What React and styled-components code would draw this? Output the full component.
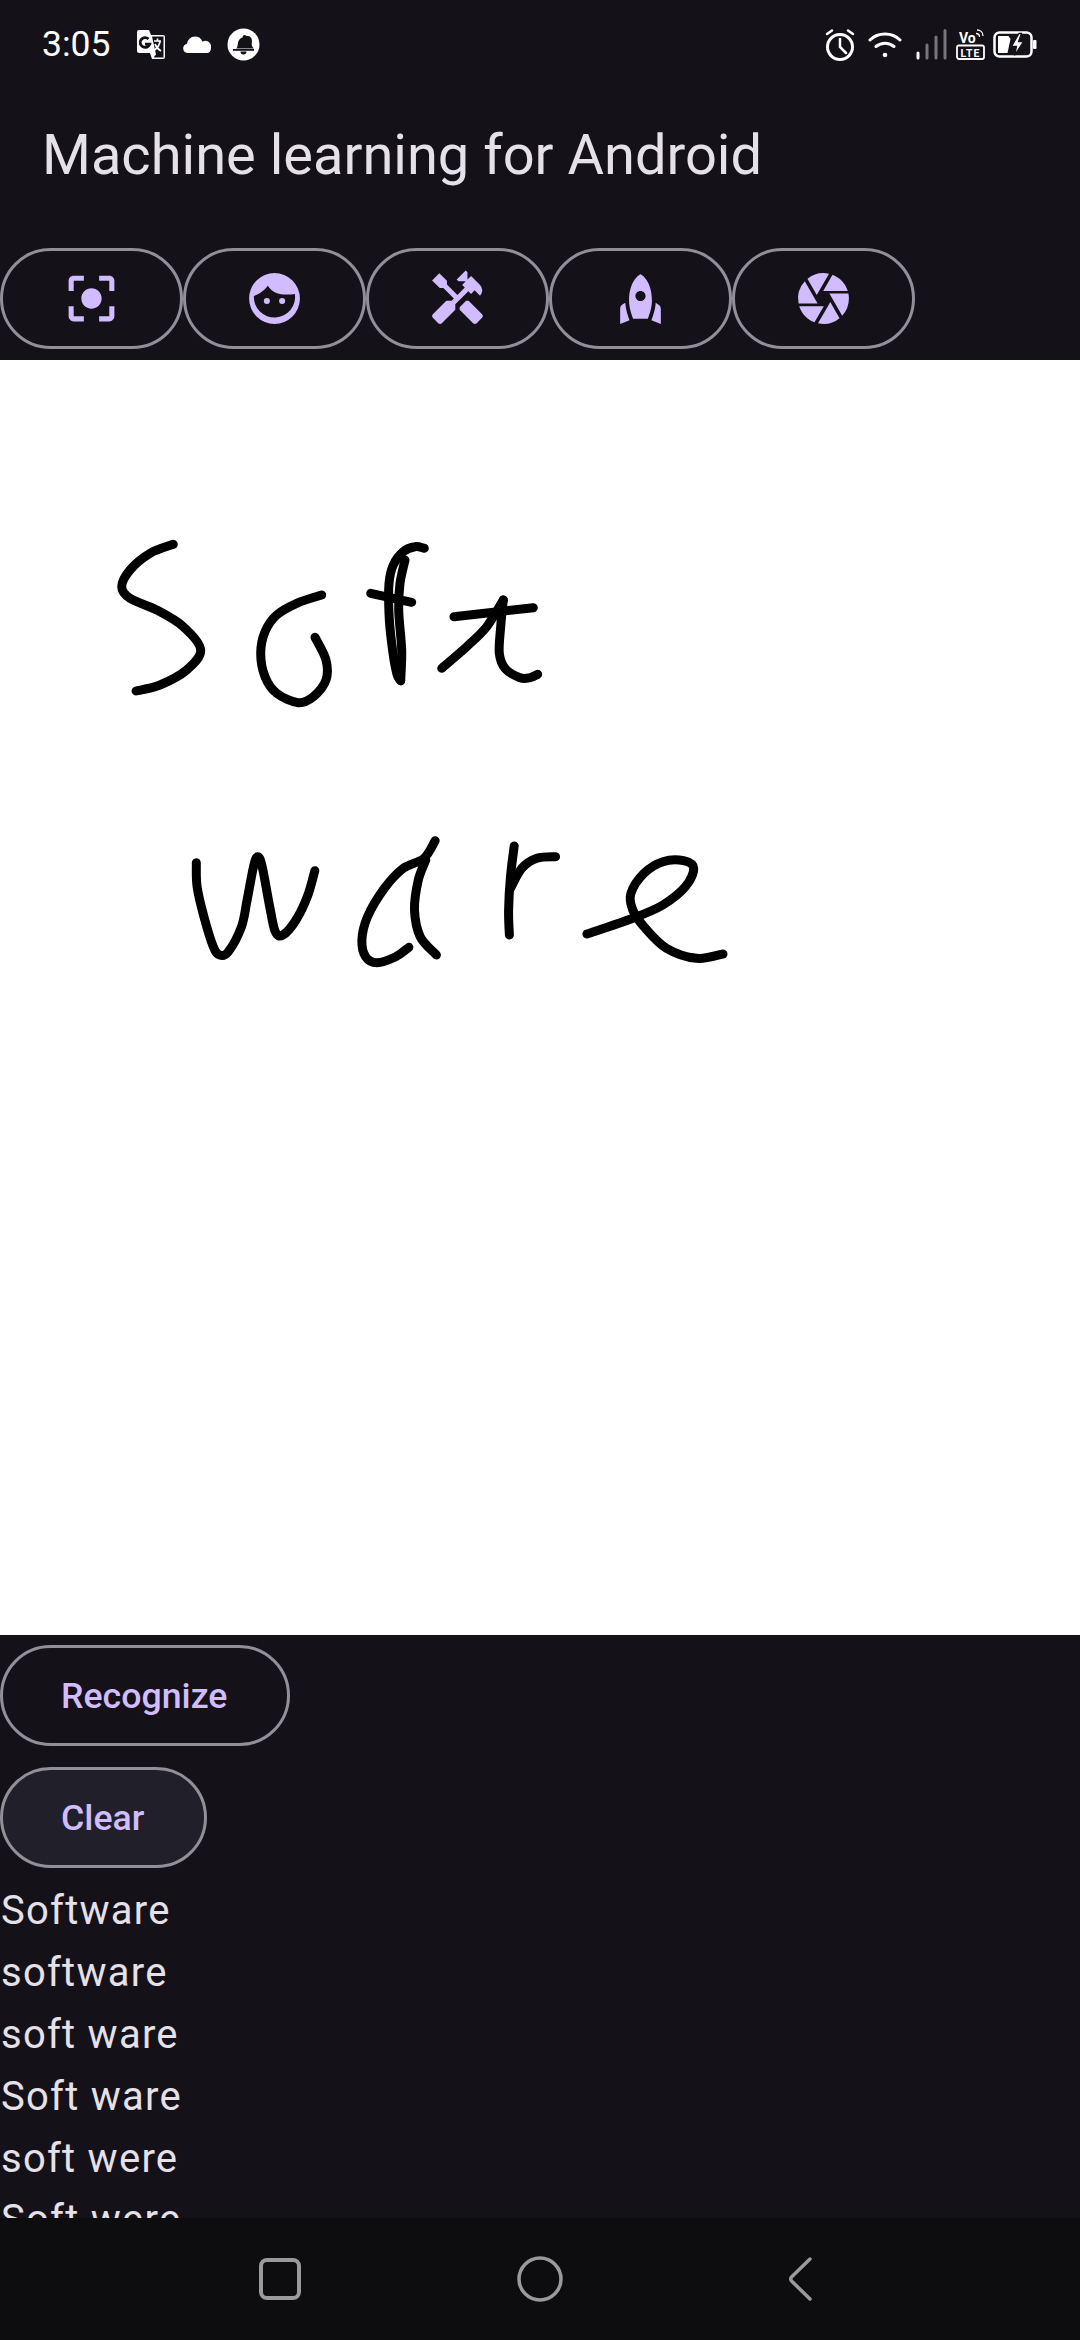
import React from "react";
import styled, { createGlobalStyle } from "styled-components";
import { MdCenterFocusStrong, MdHandyman, MdRocket, MdCamera } from "react-icons/md";

const Global = createGlobalStyle`
  html, body { margin: 0; padding: 0; background: #141218; }
  * { box-sizing: border-box; }
`;

const Screen = styled.div`
  width: 1080px; height: 2340px; display: flex; flex-direction: column;
  background: #141218; overflow: hidden; font-family: Roboto, "Noto Sans", sans-serif;
`;
const StatusBar = styled.div`
  height: 88px; flex: none; display: flex; align-items: center; justify-content: space-between;
  padding: 0 43px 0 42px; color: #fff;
`;
const StatusGroup = styled.div`display: flex; align-items: center;`;
const Time = styled.span`font-size: 35.5px; width: 95px;`;
const StatusIcon = styled.svg`display: block; flex: none; margin-left: ${p => p.$ml || 0}px;`;
const TitleBar = styled.div`
  height: 134px; flex: none; display: flex; align-items: center; padding-left: 42px;
  font-size: 56px; color: #E6E0E9;
`;
const ToolRow = styled.div`flex: none; display: flex; padding: 26px 0 11px 0;`;
const ToolButton = styled.button`
  width: 183px; height: 101px; border: 3px solid #938F99; border-radius: 51px; background: transparent;
  color: #D0BCFF; display: flex; align-items: center; justify-content: center; padding: 0;
`;
const Canvas = styled.div`height: 1275px; flex: none; background: #fff;`;
const Ink = styled.svg`display: block;`;
const Results = styled.div`flex: 1; min-height: 0; overflow: hidden; padding-top: 10px;`;
const TextButton = styled.button`
  display: block; height: 101px; margin-bottom: 21px; padding: 0 60px 0 58px; border: 3px solid #938F99;
  border-radius: 51px; background: ${p => (p.$focused ? "#211F29" : "transparent")};
  color: #D0BCFF; font: 500 35.7px Roboto, sans-serif;
`;
const Candidates = styled.div`margin-top: -9px;`;
const Candidate = styled.div`
  height: 61.9px; line-height: 61.9px; font-size: 40px; letter-spacing: 1.25px; color: #E6E0E9; padding-left: 1px;
`;
const NavBar = styled.div`
  height: 122px; flex: none; background: #0D0D0F; display: flex; justify-content: center; align-items: center;
`;
const NavCell = styled.div`width: 260px; display: flex; justify-content: center;`;

const FaceIcon = () => (
  <svg width="61" height="61" viewBox="0 0 24 24">
    <path fill="currentColor" fillRule="evenodd" d="M12 2a10 10 0 1 0 0 20 10 10 0 0 0 0-20ZM3.900 11C5.500 10.500 8 9 9.400 7 10.500 9 13 10.300 15.500 10.400 17 10.500 18.800 10.400 20 10.200A8.100 8.100 0 1 1 3.900 11ZM9 11.800a1.200 1.200 0 1 0 0 2.400 1.200 1.200 0 0 0 0-2.400ZM15 11.800a1.200 1.200 0 1 0 0 2.400 1.200 1.200 0 0 0 0-2.400Z" />
  </svg>
);

const tools = [
  <MdCenterFocusStrong key="a" size={61} />,
  <FaceIcon key="b" />,
  <MdHandyman key="c" size={61} />,
  <MdRocket key="d" size={61} />,
  <MdCamera key="e" size={61} />,
];

// Each stroke: control points read from crops of the drawing, mapped back to page coordinates.
const map5 = ([x, y]) => [90 + x / 3, 510 + y / 3];
const map6 = ([x, y]) => [170 + x / 2.658, 810 + y / 3];
const smooth = pts => {
  let d = `M${pts[0][0].toFixed(1)} ${pts[0][1].toFixed(1)}`;
  for (let i = 0; i < pts.length - 1; i++) {
    const p0 = pts[i - 1] || pts[i], p1 = pts[i], p2 = pts[i + 1], p3 = pts[i + 2] || p2;
    const c1 = [p1[0] + (p2[0] - p0[0]) / 6, p1[1] + (p2[1] - p0[1]) / 6];
    const c2 = [p2[0] - (p3[0] - p1[0]) / 6, p2[1] - (p3[1] - p1[1]) / 6];
    d += `C${c1[0].toFixed(1)} ${c1[1].toFixed(1)} ${c2[0].toFixed(1)} ${c2[1].toFixed(1)} ${p2[0].toFixed(1)} ${p2[1].toFixed(1)}`;
  }
  return d;
};
const strokes = [
  ...[
    [[250,103],[180,130],[120,180],[95,230],[120,265],[200,300],[280,350],[332,420],[290,480],[210,525],[138,543]],
    [[695,255],[620,280],[560,315],[525,365],[512,430],[525,500],[560,550],[625,578],[670,560],[708,510],[708,450],[675,382]],
    [[1003,115],[975,110],[940,125],[910,165],[897,220],[897,310],[905,400],[920,490],[932,512]],
    [[945,150],[930,220],[926,300],[935,420],[932,512]],
    [[842,250],[965,277]],
    [[1092,320],[1330,293]],
    [[1055,475],[1130,410],[1190,350],[1240,270]],
    [[1240,270],[1232,350],[1228,430],[1245,475],[1290,503],[1320,503],[1343,493]],
  ].map(s => s.map(map5)),
  ...[
    [[70,158],[72,230],[90,320],[115,410],[132,435],[155,425],[190,350],[205,270],[222,170],[233,140],[245,170],[265,290],[280,365],[300,375],[335,330],[365,260],[385,182]],
    [[705,92],[675,145],[620,175],[570,235],[525,320],[510,390],[520,440],[550,458],[600,440],[635,412]],
    [[680,150],[660,210],[650,300],[665,380],[708,435]],
    [[915,108],[905,200],[900,300],[902,375]],
    [[905,235],[935,175],[975,145],[1025,140]],
    [[1108,372],[1230,325],[1310,285],[1370,230],[1392,175],[1365,152],[1310,155],[1260,190],[1225,250],[1230,300],[1260,350],[1320,415],[1400,445],[1470,432]],
  ].map(s => s.map(map6)),
];

const candidates = ["Software", "software", "soft ware", "Soft ware", "soft were", "Soft were"];

export default function App() {
  return (
    <Screen>
      <Global />
      <StatusBar>
        <StatusGroup>
          <Time>3:05</Time>
          <StatusIcon width="28" height="29" viewBox="0 0 28 29">
            <path fill="#fff" d="M0 2a2 2 0 0 1 2-2h10l2 5h12a2 2 0 0 1 2 2v20a2 2 0 0 1-2 2H15l-2-6H2a2 2 0 0 1-2-2Z" />
            <path fill="#141218" d="M15 6.500H26.500v21H16.500L19 24.500 15 6.500Z" />
            <path fill="none" stroke="#141218" strokeWidth="2.800" d="M11.500 9a4.900 4.900 0 1 0 1.200 5.200H8" />
            <path fill="none" stroke="#fff" strokeWidth="1.700" d="M17 11h7M20.500 8.500v2.500M23 11.500c-.6 3.500-2.500 6.500-5.500 8.500M18 14c1 3 3 5.200 6 7" />
          </StatusIcon>
          <StatusIcon $ml={18} width="28" height="17" viewBox="0 0 28 17">
            <path fill="#fff" d="M4.500 17a4.500 4.500 0 0 1-.7-8.900A8.500 8.500 0 0 1 12 0.500a8 8 0 0 1 7.500 5.200A5.800 5.800 0 0 1 28 12c0 3-1.800 5-4 5Z" />
          </StatusIcon>
          <StatusIcon $ml={16} width="33" height="33" viewBox="0 0 33 33">
            <circle cx="16.500" cy="16.500" r="16" fill="#fff" />
            <path fill="#141218" d="M9 20.500c2-1 1.500-5 2.500-7.500s3-3.200 4-3.500c.3-2.500 2.500-3 3.500-1.800 2.500 0 4.500.6 5.500 2.800 1 2.500-.2 5.500.5 7.500.3 1 1 1.800 1.800 2.500Z" />
            <rect x="6" y="21" width="21" height="1.800" fill="#141218" />
            <path fill="#141218" d="M13.500 23.500h6a3 3 0 0 1-6 0Z" />
          </StatusIcon>
        </StatusGroup>
        <StatusGroup>
          <StatusIcon width="30" height="33" viewBox="0 0 30 33">
            <circle cx="15" cy="19" r="12.500" fill="none" stroke="#fff" strokeWidth="3" />
            <path fill="none" stroke="#fff" strokeWidth="2.500" strokeLinecap="round" d="M15 11v8l6 6M2 6l5-3.500M28 6l-5-3.500" />
          </StatusIcon>
          <StatusIcon $ml={13} width="34" height="27" viewBox="0 0 34 27">
            <path fill="none" stroke="#fff" strokeWidth="3" strokeLinecap="round" d="M2 9C10 1 24 1 32 9M8 15.500c5.500-4.500 12.500-4.500 18 0" />
            <circle cx="17" cy="24" r="2.300" fill="#fff" />
          </StatusIcon>
          <StatusIcon $ml={14} width="31" height="31" viewBox="0 0 31 31">
            <path stroke="#fff" strokeWidth="3" strokeLinecap="round" d="M2 29v-5" />
            <path stroke="#77767a" strokeWidth="3" strokeLinecap="round" d="M11 29V16M20 29V8M29 29V1.500" />
          </StatusIcon>
          <StatusIcon $ml={9} width="29" height="31" viewBox="0 0 29 31">
            <text x="3" y="13.500" fontFamily="Roboto, sans-serif" fontWeight="700" fontSize="14" fill="#fff">Vo</text>
            <path fill="none" stroke="#fff" strokeWidth="1.300" d="M20 4.500c2 0 3.500 1.500 3.500 3.500M21 1c3.500 0 6 2.500 6 6" />
            <rect x="1" y="16.500" width="27" height="13.500" rx="2" fill="none" stroke="#fff" strokeWidth="1.800" />
            <text x="14.500" y="27.500" textAnchor="middle" fontFamily="Roboto, sans-serif" fontWeight="700" fontSize="10.500" letterSpacing="1" fill="#fff">LTE</text>
          </StatusIcon>
          <StatusIcon $ml={8} width="44" height="27" viewBox="0 0 44 27">
            <rect x="1.500" y="1.500" width="37" height="24" rx="5" fill="none" stroke="#fff" strokeWidth="2.500" />
            <rect x="40" y="9" width="3.500" height="9" rx="1" fill="#fff" />
            <path fill="#fff" d="M5 5h10.500l2 3-3 14H5Z" />
            <path fill="#fff" stroke="#141218" strokeWidth="1.300" d="M26 2.500l-7.500 13h5l-2 9 9-14h-5l3-8Z" />
          </StatusIcon>
        </StatusGroup>
      </StatusBar>
      <TitleBar>Machine learning for Android</TitleBar>
      <ToolRow>
        {tools.map(t => <ToolButton key={t.key}>{t}</ToolButton>)}
      </ToolRow>
      <Canvas>
        <Ink width="1080" height="1275" viewBox="0 360 1080 1275">
          {strokes.map((s, i) => (
            <path key={i} d={smooth(s)} fill="none" stroke="#000" strokeWidth="9" strokeLinecap="round" strokeLinejoin="round" />
          ))}
        </Ink>
      </Canvas>
      <Results>
        <TextButton>Recognize</TextButton>
        <TextButton $focused>Clear</TextButton>
        <Candidates>
          {candidates.map(c => <Candidate key={c}>{c}</Candidate>)}
        </Candidates>
      </Results>
      <NavBar>
        <NavCell>
          <svg width="42" height="42" viewBox="0 0 42 42"><rect x="2" y="2" width="38" height="38" rx="6" fill="none" stroke="#9a9a9a" strokeWidth="4" /></svg>
        </NavCell>
        <NavCell>
          <svg width="46" height="46" viewBox="0 0 46 46"><circle cx="23" cy="23" r="21" fill="none" stroke="#9a9a9a" strokeWidth="3.500" /></svg>
        </NavCell>
        <NavCell>
          <svg width="26" height="44" viewBox="0 0 26 44"><path d="M23 2 4.500 20Q3 22 4.500 24L23 42" fill="none" stroke="#9a9a9a" strokeWidth="3.500" strokeLinecap="round" strokeLinejoin="round" /></svg>
        </NavCell>
      </NavBar>
    </Screen>
  );
}
